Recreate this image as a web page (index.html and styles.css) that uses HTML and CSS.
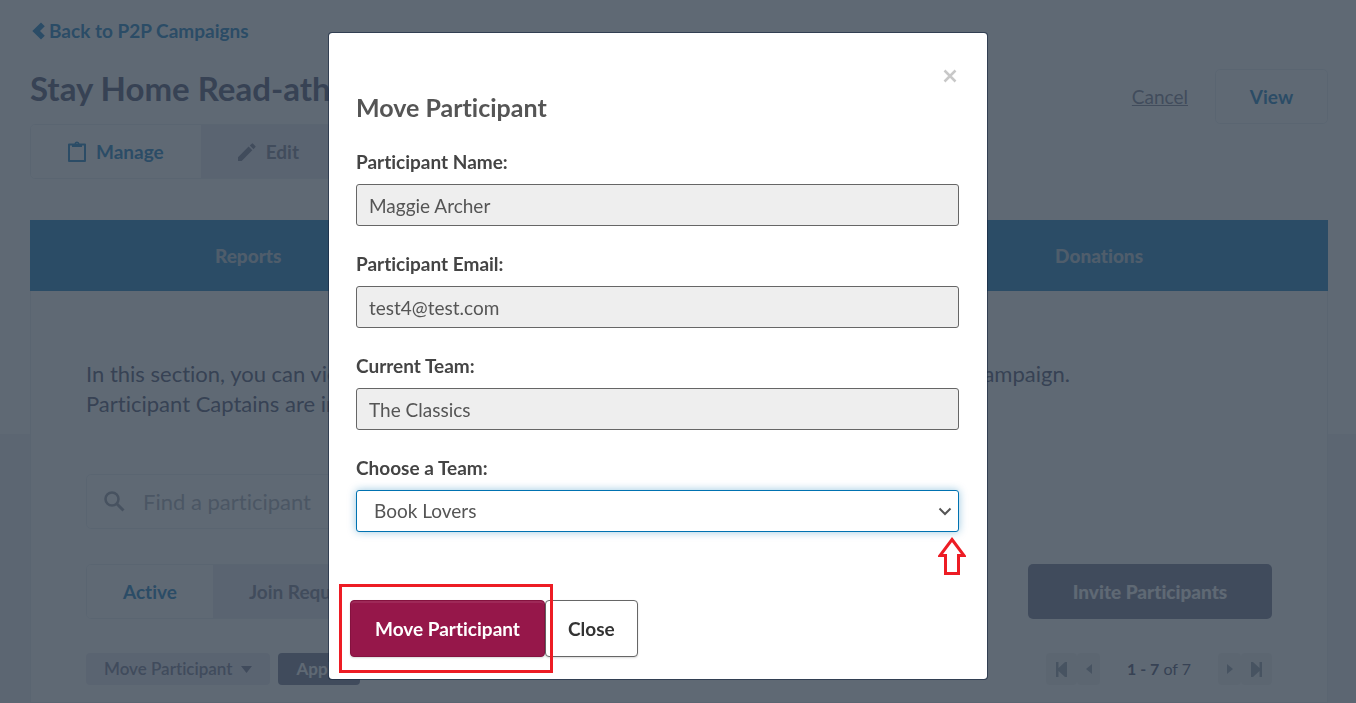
FILE: index.html
```
<!DOCTYPE html>
<html lang="en">
<head>
    <meta charset="UTF-8">
    <meta name="viewport" content="width=device-width, initial-scale=1.0">
    <title>Move Participant</title>
    <link rel="stylesheet" href="styles.css">
</head>
<body>
    <div class="page">
        <a href="#" class="back-link">
            <svg width="13" height="18" viewBox="0 0 13 18"><path d="M9 .5 12.800 4.200 8 9l4.800 4.800L9 17.500.300 9z" fill="currentColor"/></svg>
            Back to P2P Campaigns
        </a>

        <header class="page-header">
            <h1>Stay Home Read-athon</h1>
            <div class="header-actions">
                <a href="#" class="cancel">Cancel</a>
                <button type="button" class="btn-view">View</button>
            </div>
        </header>

        <div class="tabs main-tabs">
            <button type="button" class="tab active">
                <svg width="18" height="22" viewBox="0 0 18 22"><path d="M1 3.500h16v16.500H1z" fill="none" stroke="currentColor" stroke-width="2" stroke-linejoin="round"/><path fill-rule="evenodd" d="M4 3h2.500a2.500 2.500 0 0 1 5 0H14v3H4zM9 2a1 1 0 1 0 0 2 1 1 0 0 0 0-2z" fill="currentColor"/></svg>
                Manage
            </button>
            <button type="button" class="tab">
                <svg width="18" height="18" viewBox="0 0 18 18"><path d="M0 14.300V18h3.700L14.300 7.200l-3.700-3.700zM17.300 4.300a1 1 0 0 0 0-1.400L15.100.7a1 1 0 0 0-1.400 0L11.800 2.500l3.700 3.700z" fill="currentColor"/></svg>
                Edit
            </button>
        </div>

        <nav class="section-nav">
            <a href="#">Reports</a>
            <a href="#">Info</a>
            <a href="#">Donations</a>
        </nav>

        <main class="panel">
            <p class="intro">In this section, you can view and manage all of the participants who have registered for your campaign.<br>Participant Captains are indicated with a star.</p>

            <div class="search">
                <svg width="21" height="21" viewBox="0 0 21 21"><circle cx="8" cy="8" r="6.500" fill="none" stroke="currentColor" stroke-width="2.600"/><path d="M12.500 12.500 19.500 19.500" stroke="currentColor" stroke-width="3"/></svg>
                <input type="text" placeholder="Find a participant" aria-label="Find a participant">
            </div>

            <div class="row">
                <div class="tabs list-tabs">
                    <button type="button" class="tab active">Active</button>
                    <button type="button" class="tab">Join Requests</button>
                </div>
                <button type="button" class="btn-invite">Invite Participants</button>
            </div>

            <div class="row toolbar">
                <div class="bulk">
                    <button type="button" class="btn-bulk">Move Participant
                        <svg width="11" height="7" viewBox="0 0 11 7"><path d="M0 0h11L5.500 7z" fill="currentColor"/></svg>
                    </button>
                    <button type="button" class="btn-apply">Apply</button>
                </div>
                <div class="pager">
                    <div class="pager-buttons">
                        <button type="button" class="wide" aria-label="First page"><svg width="11" height="15" viewBox="0 0 11 15"><path d="M0 0h2.500v6L9 0h2v15H9L2.500 9v6H0z" fill="currentColor"/></svg></button>
                        <button type="button" aria-label="Previous page"><svg width="6" height="10" viewBox="0 0 6 10"><path d="M6 0v10L0 5z" fill="currentColor"/></svg></button>
                    </div>
                    <span><b>1 - 7</b> of 7</span>
                    <div class="pager-buttons">
                        <button type="button" aria-label="Next page"><svg width="6" height="10" viewBox="0 0 6 10"><path d="M0 0v10l6-5z" fill="currentColor"/></svg></button>
                        <button type="button" class="wide" aria-label="Last page"><svg width="11" height="15" viewBox="0 0 11 15"><path d="M11 0H8.500v6L2 0H0v15h2l6.500-6v6H11z" fill="currentColor"/></svg></button>
                    </div>
                </div>
            </div>
        </main>
    </div>

    <div class="backdrop">
        <form class="modal" role="dialog" aria-labelledby="modal-title">
            <button type="button" class="close" aria-label="Close">
                <svg width="14" height="14" viewBox="0 0 14 14"><path d="M1.500 1.500l11 11M12.500 1.500l-11 11" stroke="currentColor" stroke-width="2.500"/></svg>
            </button>
            <h2 id="modal-title">Move Participant</h2>

            <div class="form-group">
                <label for="name">Participant Name:</label>
                <input type="text" id="name" value="Maggie Archer" readonly>
            </div>
            <div class="form-group">
                <label for="email">Participant Email:</label>
                <input type="text" id="email" value="test4@test.com" readonly>
            </div>
            <div class="form-group">
                <label for="current-team">Current Team:</label>
                <input type="text" id="current-team" value="The Classics" readonly>
            </div>
            <div class="form-group">
                <label for="team">Choose a Team:</label>
                <div class="select-wrap">
                    <select id="team">
                        <option>Book Lovers</option>
                        <option>The Classics</option>
                    </select>
                    <svg class="chevron" width="14" height="9" viewBox="0 0 14 9"><path d="M1.500 1.500 7 7l5.500-5.500" fill="none" stroke="currentColor" stroke-width="2"/></svg>
                    <svg class="arrow" width="28" height="39" viewBox="0 0 28 39"><path d="M14 2.500 26 18.500H20.500V36.500H7.500V18.500H2z" fill="none" stroke="currentColor" stroke-width="3"/></svg>
                </div>
            </div>

            <div class="modal-footer">
                <div class="primary-wrap">
                    <button type="button" class="btn btn-primary">Move Participant</button>
                    <span class="marker"></span>
                </div>
                <button type="button" class="btn btn-close">Close</button>
            </div>
        </form>
    </div>
</body>
</html>
```
FILE: styles.css
```
* {
    box-sizing: border-box;
}
body {
    margin: 0;
    font-family: Lato, "Liberation Sans", sans-serif;
    font-size: 19px;
    line-height: 24px;
    font-variant-ligatures: none;
    color: #606480;
    background: linear-gradient(#fff 434px, #f3f4f5 434px);
    min-height: 100vh;
}
button, input, select {
    font: inherit;
    color: inherit;
}
button {
    cursor: pointer;
    border: none;
    padding: 0;
}
svg {
    display: block;
    flex: none;
}
a {
    color: #308cc8;
    text-decoration: none;
}

/* page */
.page {
    padding: 19px 28px 0 30px;
}
.back-link {
    display: inline-flex;
    align-items: center;
    gap: 4px;
    padding-left: 2px;
    font-weight: 700;
}
.page-header {
    display: flex;
    justify-content: space-between;
    align-items: center;
    margin-top: 24px;
    height: 55px;
}
h1 {
    margin: 0;
    font-size: 33px;
    line-height: 40px;
    font-weight: 700;
    padding-bottom: 18px;
}
.header-actions {
    display: flex;
    align-items: center;
    gap: 27px;
}
.cancel {
    color: #888ca0;
    text-decoration: underline;
}
.btn-view {
    width: 113px;
    height: 55px;
    border: 1px solid #ecf0f4;
    border-radius: 5px;
    background: #fff;
    color: #308cc8;
    font-weight: 700;
}
.tabs {
    display: inline-flex;
    height: 55px;
    border: 1px solid #ecf0f4;
    border-radius: 5px;
    overflow: hidden;
}
.tab {
    display: flex;
    align-items: center;
    padding: 0 36px;
    gap: 10px;
    background: #eceaf4;
    color: #888ca0;
    font-weight: 700;
    white-space: nowrap;
}
.tab.active {
    background: #fff;
    color: #308cc8;
}
.main-tabs {
    display: flex;
    width: max-content;
    margin-bottom: 41px;
}
.main-tabs .tab {
    padding: 0 37px;
}
.section-nav {
    display: flex;
    background: #308cc8;
}
.section-nav a {
    flex: 1 1 auto;
    text-align: center;
    line-height: 71px;
    color: #c0d0dc;
    font-weight: 900;
}
.panel {
    border: 1px solid #ecf0f4;
    border-top: none;
    padding: 68px 55px 17px;
    background: #fff;
}
.intro {
    margin: 0;
    font-size: 22px;
    line-height: 30px;
}
.search {
    display: flex;
    align-items: center;
    gap: 18px;
    width: 480px;
    height: 55px;
    margin: 55px 0 35px;
    padding: 0 17px;
    border: 1px solid #ecf0f4;
    border-radius: 5px;
    color: #a0a4b0;
}
.search input {
    flex: 1;
    border: none;
    outline: none;
    padding: 0;
    font-size: 22px;
    background: none;
}
.search input::placeholder {
    color: #b0b4be;
}
.row {
    display: flex;
    justify-content: space-between;
    align-items: center;
}
.btn-invite {
    width: 244px;
    height: 55px;
    border-radius: 5px;
    background: #8488a0;
    color: #fff;
    font-weight: 900;
}
.toolbar {
    margin-top: 34px;
    font-size: 17px;
}
.bulk {
    display: flex;
    gap: 8px;
}
.btn-bulk {
    display: flex;
    align-items: center;
    gap: 8px;
    height: 32px;
    padding: 0 18px;
    border-radius: 4px;
    background: #eceaf4;
    color: #8488a0;
    font-weight: 600;
}
.btn-apply {
    height: 32px;
    padding: 0 19px;
    border-radius: 4px;
    background: #8488a0;
    color: #fff;
    font-weight: 700;
}
.pager {
    display: flex;
    align-items: center;
    gap: 27px;
    font-size: 16px;
}
.pager-buttons {
    display: flex;
}
.pager-buttons button {
    display: flex;
    align-items: center;
    justify-content: center;
    width: 23px;
    height: 32px;
    border-radius: 4px;
    background: #f2f2f4;
    color: #a0a8b4;
}
.pager-buttons .wide {
    width: 31px;
}

/* modal */
.backdrop {
    position: fixed;
    inset: 0;
    display: flex;
    align-items: flex-start;
    justify-content: center;
    padding: 32px 40px 0 0;
    background: rgba(41, 55, 69, 0.75);
}
.modal {
    position: relative;
    width: 660px;
    padding: 60px 28px 22px 27px;
    background: #fff;
    background-clip: padding-box;
    border: 1px solid rgba(20, 35, 60, 0.6);
    border-radius: 4px;
    color: #555;
}
.close {
    position: absolute;
    top: 36px;
    right: 30px;
    background: none;
    color: #c8c8c8;
}
h2 {
    margin: 0 0 29px;
    font-size: 25px;
    line-height: 28px;
    font-weight: 700;
}
.form-group {
    margin-bottom: 26px;
}
.form-group label {
    display: block;
    margin-bottom: 10px;
    color: #444;
    font-weight: 700;
}
.form-group input, .form-group select {
    display: block;
    width: 100%;
    height: 42px;
    padding: 0 12px;
    border: 1px solid #666;
    border-radius: 3px;
    background: #eee;
    color: #555;
}
.select-wrap {
    position: relative;
}
.form-group select {
    appearance: none;
    padding: 0 17px;
    border-color: #0072b1;
    background: #fff;
    box-shadow: 0 0 8px rgba(0, 114, 177, 0.4);
}
.chevron {
    position: absolute;
    right: 7px;
    top: 17px;
    pointer-events: none;
}
.arrow {
    position: absolute;
    right: -7px;
    top: 47px;
    color: #ed1c24;
}
.modal-footer {
    display: flex;
    margin: 68px 0 0 -6px;
}
.primary-wrap {
    position: relative;
}
.btn {
    height: 57px;
    padding: 0 22px;
    border: 1px solid #666;
    border-radius: 4px;
    font-weight: 700;
    box-shadow: 0 1px 2px rgba(0, 0, 0, 0.15);
}
.btn-primary {
    padding: 0 24px;
    background: #96174a;
    border-color: #85123f;
    color: #fff;
    box-shadow: inset 0 2px 0 rgba(255, 255, 255, 0.08), 0 1px 2px rgba(0, 0, 0, 0.15);
}
.btn-close {
    background: #fff;
    color: #333;
}
.marker {
    position: absolute;
    inset: -16px -8px -16px -11px;
    border: 3px solid #ed1c24;
    z-index: 1;
    pointer-events: none;
}
```
